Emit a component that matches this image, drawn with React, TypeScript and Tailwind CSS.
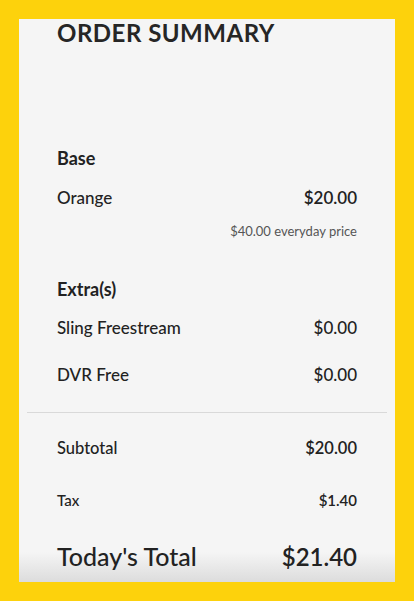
import React from "react";

const font = { fontFamily: '"Lato", "Noto Sans", sans-serif' };

function Row({ label, value, labelCls, valueCls, mt }: { label: string; value: string; labelCls: string; valueCls: string; mt: string }) {
  return (
    <div className={`flex justify-between items-baseline ${mt}`}>
      <span className={labelCls}>{label}</span>
      <span className={valueCls}>{value}</span>
    </div>
  );
}

export default function App() {
  return (
    <div className="w-[414px] h-[601px] bg-[#fdd20c] pt-[19px] px-[19px]" style={font}>
      <div className="relative w-[376px] h-[563px] bg-[#f5f5f5] overflow-hidden text-[#222222]">
        <div className="absolute left-0 right-0 bottom-0 h-[30px] bg-gradient-to-b from-[#f5f5f5]/0 to-[#dcdcdc]" />
        <div className="relative px-[38px] pt-[2px]">
          <div className="text-[24px] leading-[24px] font-bold tracking-[0.5px] text-[#262626]">ORDER SUMMARY</div>
          <div className="mt-[103px] text-[18px] leading-[20px] font-bold">Base</div>
          <Row mt="mt-[20px]" label="Orange" value="$20.00" labelCls="text-[17px] leading-[20px] font-medium" valueCls="text-[17px] leading-[20px] font-semibold" />
          <div className="mt-[15px] text-right text-[13px] leading-[16px] text-[#555555]">$40.00 everyday price</div>
          <div className="mt-[40px] text-[18px] leading-[20px] font-bold">Extra(s)</div>
          <Row mt="mt-[19px]" label="Sling Freestream" value="$0.00" labelCls="text-[17px] leading-[20px] font-medium" valueCls="text-[17px] leading-[20px] font-medium" />
          <Row mt="mt-[27px]" label="DVR Free" value="$0.00" labelCls="text-[17px] leading-[20px] font-medium" valueCls="text-[17px] leading-[20px] font-medium" />
          <div className="mt-[27px] -mx-[30px] h-px bg-[#d9d9d9]" />
          <Row mt="mt-[25px]" label="Subtotal" value="$20.00" labelCls="text-[16.5px] leading-[20px] font-medium" valueCls="text-[16.5px] leading-[20px] font-semibold" />
          <Row mt="mt-[32px]" label="Tax" value="$1.40" labelCls="text-[15px] leading-[20px] font-medium" valueCls="text-[15px] leading-[20px] font-semibold" />
          <Row mt="mt-[31px]" label="Today's Total" value="$21.40" labelCls="text-[25px] leading-[30px] font-medium" valueCls="text-[24px] leading-[30px] font-semibold" />
        </div>
      </div>
    </div>
  );
}
